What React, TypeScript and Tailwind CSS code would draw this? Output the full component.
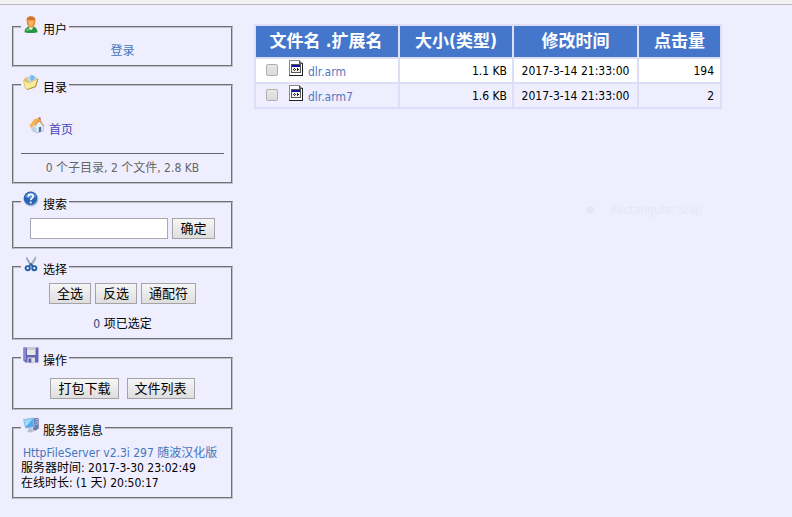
import type { ReactNode } from "react";

const files = [
  { name: "dlr.arm", size: "1.1 KB", modified: "2017-3-14 21:33:00", hits: 194 },
  { name: "dlr.arm7", size: "1.6 KB", modified: "2017-3-14 21:33:00", hits: 2 },
];

function UserIcon() {
  return (
    <svg className="h-[17px] w-4" viewBox="0 0 16 16" preserveAspectRatio="none" aria-hidden>
      <path d="M1.500 15.200c0-3.200 2-4.900 4.900-5.300h3.400c2.900.4 4.700 2.100 4.700 5.300-2.500 1.100-10.500 1.100-13 0z" fill="#2c9447" />
      <path d="M3 14.300c.3-2 1.500-2.800 3-3.200l1 2z" fill="#6cc77e" />
      <path d="M6 9.500h4l-.4 2.500L8 13.500 6.400 12z" fill="#f4f3d8" />
      <path d="M3.500 3.200C3.900.8 5.800.2 8 .2s4.100.7 4.500 3l-.5 4.400c-.5 2.100-2 3.300-4 3.300S4.500 9.700 4 7.600z" fill="#e98c35" />
      <path d="M5.500 4.500h5L10.200 8.200 8 9.800 5.800 8.200z" fill="#f9b66b" />
      <path d="M3.800 3.500C4.500 1 6.300.5 8 .5s3.500.7 4.100 3z" fill="#c9752f" />
    </svg>
  );
}

function FolderIcon() {
  return (
    <svg className="size-4" viewBox="0 0 16 16" aria-hidden>
      <path d="M1 5l3-2 2 1 7-1 2 2-2 8-9 3-2-2z" fill="#e1c25c" />
      <path d="M4 5l4-5 5 3 1 5-6 3z" fill="#bcdcf5" />
      <path d="M7 3l2-2 3 2-1 3-3 1z" fill="#7db7ea" />
      <path d="M.5 6.500L6 9l8.500-4-1.800 7.500L4.200 15.500 2 13z" fill="#faec9d" stroke="#d6b95a" strokeWidth=".6" />
      <path d="M4.500 15.500l8.200-3L14.900 5" fill="none" stroke="#9b8440" strokeWidth=".8" />
    </svg>
  );
}

function HomeIcon() {
  return (
    <svg className="size-4" viewBox="0 0 16 16" aria-hidden>
      <path d="M9.500.5h2v4h-2z" fill="#8b3d2e" />
      <path d="M3 7.500L9 3l5.300 6v5L8 15.800l-5-2.300z" fill="#e8f1fa" stroke="#9ab2ce" strokeWidth=".7" />
      <path d="M3 9l4.500 2v4.500L3 13.500z" fill="#bdd0e6" />
      <path d="M9.800 10.300l2.400-.6v4.900l-2.400.6z" fill="#4d6f9c" />
      <path d="M.3 8.800L5.500 2l5-.8L6 7l-3.500 4z" fill="#f5b050" />
      <path d="M6 6.800l4.500-5.600 5 8-1 .4-4-5.600-5 6.200z" fill="#e59a4d" />
    </svg>
  );
}

function HelpIcon() {
  return (
    <svg className="size-4" viewBox="0 0 16 16" aria-hidden>
      <circle cx="8" cy="8" r="7.600" fill="#a9bfdf" />
      <circle cx="7.500" cy="7.300" r="6.700" fill="#2b62b4" />
      <path d="M2 5.500a6 6 0 0111.200 0C10 8 5 8 2 5.500z" fill="#5c93d6" />
      <path d="M5.200 5.800c0-3.200 4.900-3.300 4.900-.4 0 1.900-2.400 1.900-2.400 3.900" fill="none" stroke="#fff" strokeWidth="1.700" />
      <circle cx="7.700" cy="11.500" r="1.100" fill="#fff" />
    </svg>
  );
}

function ScissorsIcon() {
  return (
    <svg className="size-4" viewBox="0 0 16 16" aria-hidden>
      <path d="M3.500.5l6 9.700-1.800.6L3.200 3z" fill="#8b9cb1" />
      <path d="M12.500.5l-6 9.700 1.800.6L12.800 3z" fill="#b2becd" stroke="#7588a0" strokeWidth=".4" />
      <circle cx="4.700" cy="12.200" r="2.100" fill="#e6f0fa" stroke="#235fa8" strokeWidth="1.900" />
      <circle cx="11.300" cy="12.200" r="2.100" fill="#e6f0fa" stroke="#235fa8" strokeWidth="1.900" />
      <path d="M6 10.200l2-2.200 2 2.200" fill="none" stroke="#235fa8" strokeWidth="1.600" />
    </svg>
  );
}

function DiskIcon() {
  return (
    <svg className="size-4" viewBox="0 0 16 16" aria-hidden>
      <path d="M.5.500h15v15h-13l-2-2z" fill="#6264b4" />
      <path d="M.5.500h2.500v13H.5z" fill="#8588ca" />
      <path d="M4 .5h8.500v7.500H4z" fill="#e7e7ea" />
      <path d="M4 .5h8.500V3H4z" fill="#c9c9ce" />
      <path d="M4.500 10.500h7.500v5H4.500z" fill="#dddde8" />
      <path d="M5.500 11.500h2.800v4H5.500z" fill="#5557a4" />
    </svg>
  );
}

function ServerIcon() {
  return (
    <svg className="size-4" viewBox="0 0 16 16" aria-hidden>
      <path d="M10 1.500l4-.8 1.800 1v9.800l-3.500 2.300-2.300-1z" fill="#6b7bab" />
      <path d="M12.300 3l3-.7M12.300 5.200l3-.7M12.300 7.400l3-.7" stroke="#c3cfea" strokeWidth=".9" />
      <path d="M0 2.200L10.500.5l1.200 9.800-9.500 1.200z" fill="#9bbde3" />
      <path d="M1.200 3.100l8.500-1.400.9 7.800-7.700 1z" fill="#4fa9ea" />
      <path d="M1.200 3.100l8.500-1.400L4 8.800l-1.400.5z" fill="#9bdcfa" />
      <path d="M5 11.200h4l1 2.300 1.500.8-4.500 1.500-3.500-1.500 2-1z" fill="#b5bfd2" />
    </svg>
  );
}

function BinaryFileIcon() {
  return (
    <svg className="h-4 w-[14px] shrink-0" viewBox="0 0 14 16" shapeRendering="crispEdges" aria-hidden>
      <path d="M0 0h11v1h1v1h1v1h1v13H0z" fill="#88888c" />
      <path d="M1 1h9v3h3v11H1z" fill="#fff" />
      <path d="M13 3h1v13H0v-1h13z" fill="#222" />
      <path d="M10 1h1v2h2v1h-3z" fill="#555" />
      <path d="M2 4h10v9H2z" fill="#55555c" />
      <path d="M3 7h8v5H3z" fill="#f6f6ee" />
      <path d="M3 5h8v2H3z" fill="#14149a" />
      <path d="M4 9h1v1H4zM5 8h1v1H5zM5 10h1v1H5zM6 9h1v1H6zM8 8h1v3H8zM9 9h1v1H9z" fill="#222" />
    </svg>
  );
}

function Panel({ icon, title, children }: { icon: ReactNode; title: string; children: ReactNode }) {
  return (
    <fieldset className="min-w-0 border-2 border-[#c0c0c8] px-[7px] [border-style:groove]">
      <legend className="flex h-[21px] gap-1 px-0.5">
        {icon}
        <span className="pt-1.5 leading-4">{title}</span>
      </legend>
      {children}
    </fieldset>
  );
}

function Button({ children }: { children: ReactNode }) {
  return (
    <button
      type="button"
      className="h-[21px] border border-[#a3a3a8] bg-linear-to-b from-[#f6f6f6] to-[#dedede] px-[7px] text-[13px] leading-[18px] whitespace-nowrap"
    >
      {children}
    </button>
  );
}

function Sidebar() {
  return (
    <aside className="flex w-[221px] shrink-0 flex-col gap-[7px]">
      <Panel icon={<UserIcon />} title="用户">
        <div className="py-1.5 text-center leading-4">
          <a href="#login" className="text-[#4477bb]">登录</a>
        </div>
      </Panel>

      <Panel icon={<FolderIcon />} title="目录">
        <a href="#home" className="mt-[22px] ml-2 flex w-fit gap-1 text-[#4444bb]">
          <HomeIcon />
          <span className="pt-[5px] leading-4">首页</span>
        </a>
        <div className="mt-[15px] border-t border-[#666677] py-1.5 text-center leading-4 text-[#666]">
          0 个子目录, 2 个文件, 2.8 KB
        </div>
      </Panel>

      <Panel icon={<HelpIcon />} title="搜索">
        <form className="flex justify-center gap-1 pt-1.5 pb-2">
          <input type="text" aria-label="搜索" className="h-[21px] w-[138px] border border-[#a9a9b2] bg-white px-1" />
          <Button>确定</Button>
        </form>
      </Panel>

      <Panel icon={<ScissorsIcon />} title="选择">
        <div className="flex justify-center gap-1 pt-1.5">
          <Button>全选</Button>
          <Button>反选</Button>
          <Button>通配符</Button>
        </div>
        <div className="pt-3 pb-1.5 text-center leading-4">
          <span className="text-[#334477]">0</span> 项已选定
        </div>
      </Panel>

      <Panel icon={<DiskIcon />} title="操作">
        <div className="flex justify-center gap-2 pt-2.5 pb-[9px]">
          <Button>打包下载</Button>
          <Button>文件列表</Button>
        </div>
      </Panel>

      <Panel icon={<ServerIcon />} title="服务器信息">
        <div className="pt-2 pb-1.5 leading-[15px] whitespace-nowrap">
          <a href="#hfs" className="ml-0.5 text-[#4477bb]">HttpFileServer v2.3i 297 随波汉化版</a>
          <p>服务器时间: 2017-3-30 23:02:49</p>
          <p>在线时长: (1 天) 20:50:17</p>
        </div>
      </Panel>
    </aside>
  );
}

function FileTable() {
  return (
    <table className="w-[468px] table-fixed border-collapse [&_td]:border-2 [&_td]:border-[#ddddf8] [&_th]:border-2 [&_th]:border-[#ddddf8]">
      <colgroup>
        <col className="w-[144px]" />
        <col className="w-[114px]" />
        <col className="w-[125px]" />
        <col />
      </colgroup>
      <thead>
        <tr className="h-[33px] bg-[#4477cc] text-[17px] text-white">
          <th className="pr-0.5">文件名 .扩展名</th>
          <th>大小(类型)</th>
          <th>修改时间</th>
          <th>点击量</th>
        </tr>
      </thead>
      <tbody>
        {files.map((file) => (
          <tr key={file.name} className="h-[25px] odd:bg-white">
            <td className="pl-2.5">
              <div className="flex h-[21px] items-start">
                <input
                  type="checkbox"
                  aria-label={file.name}
                  className="mt-1 mr-[11px] size-3 appearance-none rounded-xs border border-[#b0b0b0] bg-linear-to-b from-[#e8e8e8] to-[#dadada]"
                />
                <BinaryFileIcon />
                <a href={`#${file.name}`} className="pt-1 pl-[5px] leading-4 text-[#5577bb]">{file.name}</a>
              </div>
            </td>
            <td className="pr-[5px] text-right">{file.size}</td>
            <td className="text-center">{file.modified}</td>
            <td className="pr-1.5 text-right">{file.hits}</td>
          </tr>
        ))}
      </tbody>
    </table>
  );
}

export default function App() {
  return (
    <div className="min-h-screen bg-[#eeeeff] font-['DejaVu_Sans_Condensed','Noto_Sans_CJK_SC',sans-serif] text-[12px] text-black">
      <div className="h-[5px] border-b border-[#b8b8c0] bg-[#f2f2f2]" />
      <div className="flex items-start gap-[21px] pt-[11px] pl-3">
        <Sidebar />
        <main className="pt-2">
          <FileTable />
          <div className="mt-[93px] ml-[332px] flex items-center gap-4 leading-4 text-[#e6e6f6]">
            <span className="size-2 rounded-full bg-[#e6e6f6]" />
            Rectangular Snip
          </div>
        </main>
      </div>
    </div>
  );
}
